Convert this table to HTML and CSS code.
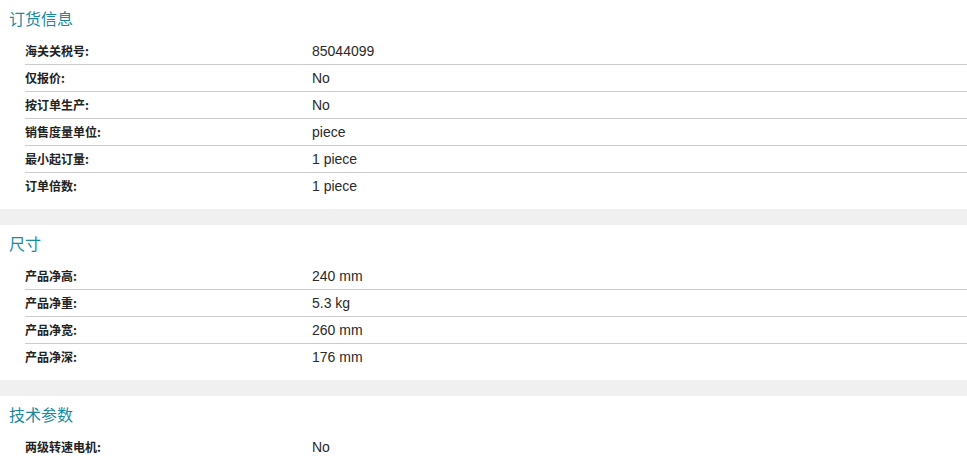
FILE: index.html
```html
<!DOCTYPE html>
<html lang="zh-CN">
<head>
<meta charset="utf-8">
<title>产品信息</title>
<link rel="stylesheet" href="styles.css">
</head>
<body>
<section class="section">
  <h2 class="section-title">订货信息</h2>
  <div class="rows">
    <div class="row"><span class="label">海关关税号:</span><span class="value">85044099</span></div>
    <div class="row"><span class="label">仅报价:</span><span class="value">No</span></div>
    <div class="row"><span class="label">按订单生产:</span><span class="value">No</span></div>
    <div class="row"><span class="label">销售度量单位:</span><span class="value">piece</span></div>
    <div class="row"><span class="label">最小起订量:</span><span class="value">1 piece</span></div>
    <div class="row"><span class="label">订单倍数:</span><span class="value">1 piece</span></div>
  </div>
</section>
<div class="band"></div>
<section class="section">
  <h2 class="section-title">尺寸</h2>
  <div class="rows">
    <div class="row"><span class="label">产品净高:</span><span class="value">240 mm</span></div>
    <div class="row"><span class="label">产品净重:</span><span class="value">5.3 kg</span></div>
    <div class="row"><span class="label">产品净宽:</span><span class="value">260 mm</span></div>
    <div class="row"><span class="label">产品净深:</span><span class="value">176 mm</span></div>
  </div>
</section>
<div class="band"></div>
<section class="section">
  <h2 class="section-title">技术参数</h2>
  <div class="rows">
    <div class="row"><span class="label">两级转速电机:</span><span class="value">No</span></div>
  </div>
</section>
</body>
</html>
```

FILE: styles.css
```css
html, body {
  margin: 0;
  padding: 0;
  background: #fff;
}
body {
  font-family: "Liberation Sans", "Noto Sans CJK SC", sans-serif;
  color: #333;
}
.section {
  padding: 0 0 10px 0;
}
.section-title {
  margin: 0;
  height: 38px;
  padding: 8px 0 0 9px;
  box-sizing: border-box;
  font-family: "Noto Sans CJK SC", sans-serif;
  font-weight: normal;
  font-size: 16px;
  line-height: 20px;
  color: #1a8aa0;
}
.rows {
  margin-left: 25px;
}
.row {
  display: flex;
  align-items: center;
  box-sizing: border-box;
  height: 27px;
  padding-bottom: 1px;
  border-bottom: 1px solid #cccccc;
}
.row:last-child {
  border-bottom: none;
  height: 26px;
}
.label {
  width: 287px;
  flex-shrink: 0;
  font-family: "Noto Sans CJK SC", sans-serif;
  font-weight: bold;
  font-size: 12px;
  color: #222;
}
.value {
  font-family: "Liberation Sans", sans-serif;
  font-size: 14px;
  color: #2a2a2a;
}
.band {
  height: 16px;
  background: #f0f0f0;
}
```
